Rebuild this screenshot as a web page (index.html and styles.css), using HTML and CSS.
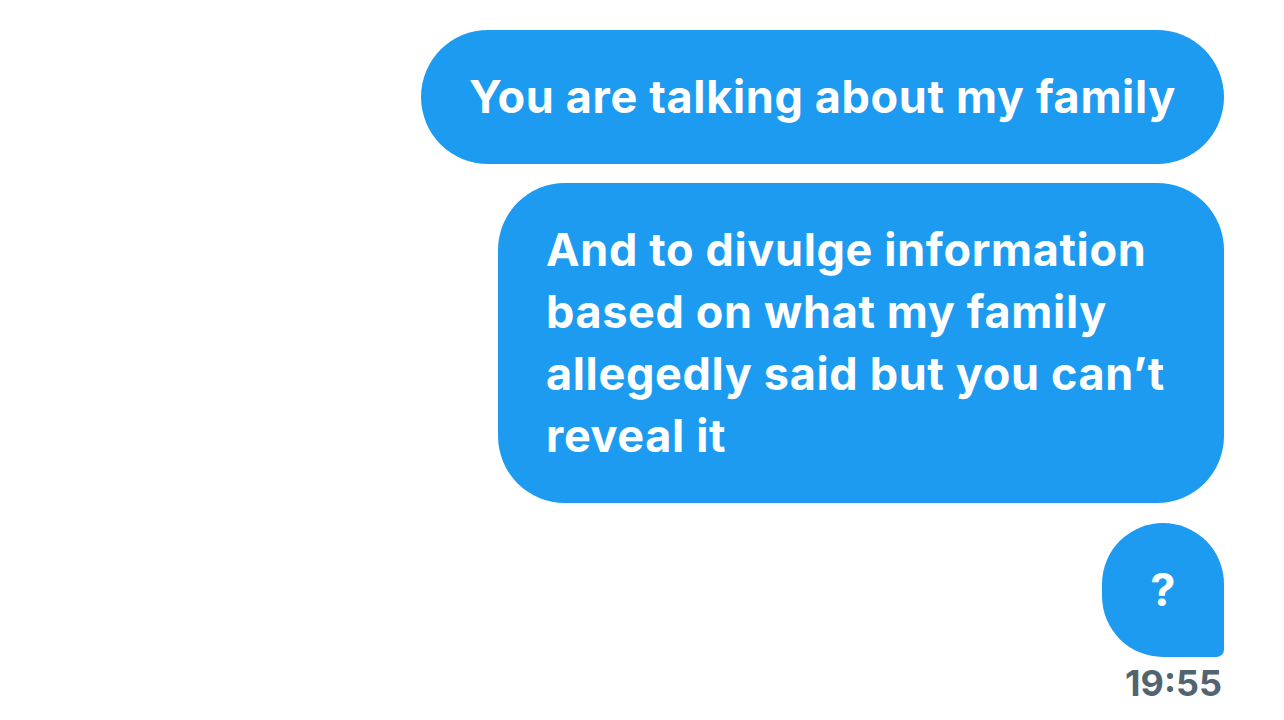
FILE: index.html
```html
<!DOCTYPE html>
<html>
<head>
<meta charset="utf-8">
<link rel="stylesheet" href="styles.css">
</head>
<body>
<div class="thread">
  <div class="bubble">You are talking about my family</div>
  <div class="bubble wide">And to divulge information<br>based on what my family<br>allegedly said but you can’t<br>reveal it</div>
  <div class="bubble last">?</div>
  <div class="time">19:55</div>
</div>
</body>
</html>
```
FILE: styles.css
```css
html, body {
  margin: 0;
  padding: 0;
  background: #ffffff;
}
body {
  width: 1284px;
  height: 720px;
  overflow: hidden;
  font-family: "Inter", "Roboto", "Liberation Sans", sans-serif;
}
.thread {
  display: flex;
  flex-direction: column;
  align-items: flex-end;
  padding: 30px 60px 0 0;
  gap: 19px;
}
.bubble {
  background: #1d9bf0;
  color: #ffffff;
  font-weight: 700;
  font-size: 45px;
  line-height: 62px;
  padding: 36px 48px;
  border-radius: 67px;
  letter-spacing: 0.65px;
}
.wide {
  width: 630px;
}
.last {
  border-bottom-right-radius: 8px;
  margin-top: 1px;
}
.time {
  margin-top: -14px;
  color: #536471;
  font-weight: 700;
  font-size: 36px;
  line-height: 42px;
  padding-right: 2px;
}
```
